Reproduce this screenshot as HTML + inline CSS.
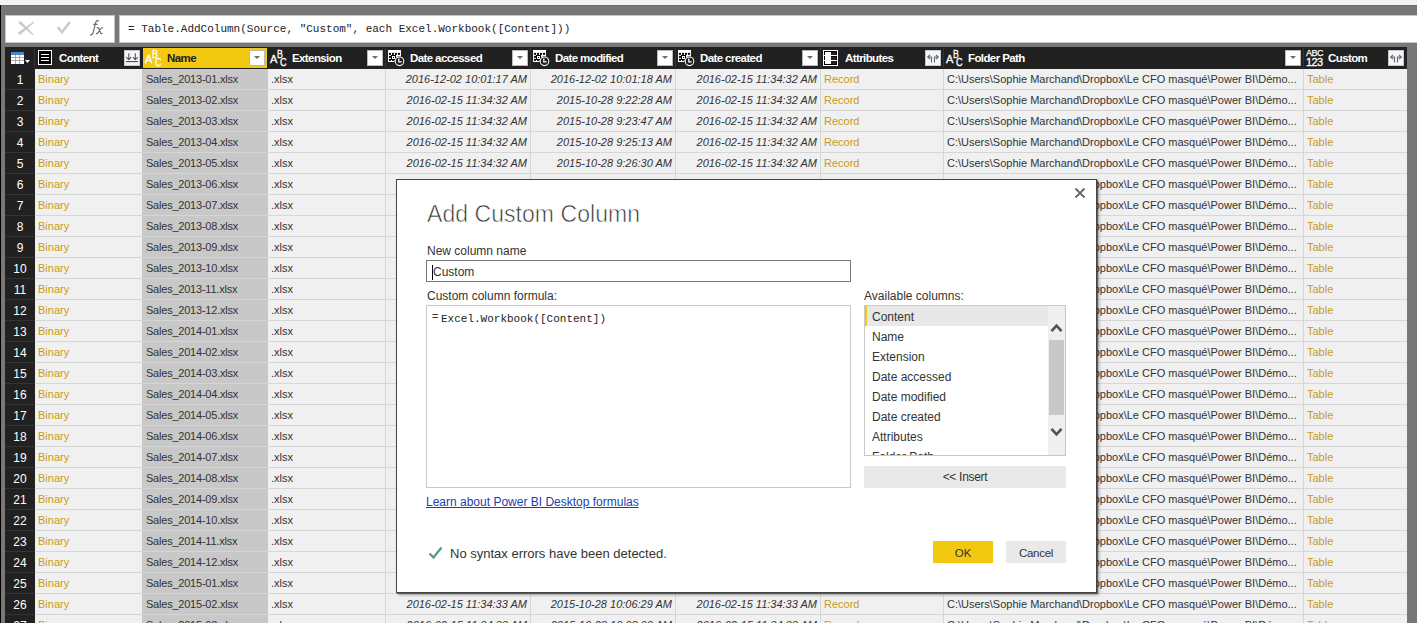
<!DOCTYPE html><html><head><meta charset="utf-8"><style>
*{margin:0;padding:0;box-sizing:border-box}
html,body{width:1417px;height:623px;overflow:hidden}
body{position:relative;background:#f3f3f3;font-family:"Liberation Sans",sans-serif;}
.a{position:absolute}
.t{position:absolute;white-space:nowrap;font-size:11px;line-height:13px}
.hd{position:absolute;white-space:nowrap;font-size:11.5px;line-height:13px;font-weight:bold;color:#fff;letter-spacing:-0.6px}
.dd{position:absolute;width:16px;height:16px;background:#fff;border:1px solid #b8b8b8}
.dd::after{content:"";position:absolute;left:4px;top:5px;border-left:3.5px solid transparent;border-right:3.5px solid transparent;border-top:3.5px solid #6a6a6a}
.rn{position:absolute;left:5px;width:30px;text-align:center;color:#fff;font-size:12px;line-height:13px}
.g{color:#c99a1a}
.d{color:#333}
.i{font-style:italic}
</style></head><body>

<div class="a" style="left:0;top:5px;width:1417px;height:618px;background:#777"></div>
<div class="a" style="left:0;top:5px;width:1417px;height:1px;background:#6e6e6e"></div>
<div class="a" style="left:0;top:5px;width:1px;height:618px;background:#000"></div>
<div class="a" style="left:5px;top:15px;width:110px;height:28px;background:#fff;border:1px solid #c6c6c6"></div>
<div class="a" style="left:119px;top:15px;width:1300px;height:28px;background:#fff;border:1px solid #c6c6c6"></div>
<div class="t" style="left:128px;top:23px;font-family:'Liberation Mono',monospace;font-size:11px;color:#222">= Table.AddColumn(Source, "Custom", each Excel.Workbook([Content]))</div>
<svg class="a" style="left:15px;top:18px" width="22" height="20" viewBox="15 18 22 20"><path d="M20.4 21.05 L33.27 34.41 L32.73 34.99 L18.6 22.95 Z" fill="#c9c9c9" stroke="#c9c9c9" stroke-width="0.6" stroke-linejoin="round"/><path d="M19.8 34.72 L33.85 22.51 L33.35 21.89 L18.2 32.68 Z" fill="#c9c9c9" stroke="#c9c9c9" stroke-width="0.6" stroke-linejoin="round"/></svg>
<svg class="a" style="left:53px;top:18px" width="22" height="20" viewBox="53 18 22 20"><path d="M57.8 27 L62 32.2 L69.8 22" stroke="#cbcbcb" stroke-width="2.6" fill="none"/></svg>
<svg class="a" style="left:85px;top:16px" width="22" height="24" viewBox="85 16 22 24"><path d="M98.8 21.3 C98.3 20.4 96.6 20.2 95.9 22 C95.2 23.8 94.2 29 93.3 32.2 C92.6 34.6 91.2 35.4 90.2 34.5" stroke="#666" stroke-width="1.15" fill="none"/><path d="M93 24.3 H97.8" stroke="#666" stroke-width="1.1"/><path d="M96.6 28 C97.8 27.3 98.6 27.6 99.2 29.4 L100.4 32.6 C100.9 33.9 101.8 34 102.6 33.2 M102.8 27.8 C102 27.5 101.3 28 100.5 29 L98 32.6 C97.4 33.5 96.6 33.8 96 33.5" stroke="#666" stroke-width="1.2" fill="none"/></svg>
<div class="a" style="left:5px;top:47px;width:1402px;height:22px;background:#212121"></div>
<div class="a" style="left:34px;top:48px;width:1px;height:20px;background:#333"></div>
<div class="a" style="left:385px;top:48px;width:1px;height:20px;background:#333"></div>
<div class="a" style="left:530px;top:48px;width:1px;height:20px;background:#333"></div>
<div class="a" style="left:675px;top:48px;width:1px;height:20px;background:#333"></div>
<div class="a" style="left:820px;top:48px;width:1px;height:20px;background:#333"></div>
<div class="a" style="left:943px;top:48px;width:1px;height:20px;background:#333"></div>
<div class="a" style="left:1303px;top:48px;width:1px;height:20px;background:#333"></div>
<div class="a" style="left:143px;top:48px;width:124px;height:20px;background:#f2c811"></div>
<div class="a" style="left:5px;top:69px;width:30px;height:554px;background:#212121"></div>
<div class="a" style="left:35px;top:69px;width:1372px;height:554px;background:#f0f0f0"></div>
<div class="a" style="left:142px;top:69px;width:126px;height:554px;background:#c8c8c8"></div>
<div class="a" style="left:35px;top:89px;width:1372px;height:1px;background:#d6d6d6"></div>
<div class="a" style="left:5px;top:89px;width:30px;height:1px;background:#333"></div>
<div class="a" style="left:35px;top:110px;width:1372px;height:1px;background:#d6d6d6"></div>
<div class="a" style="left:5px;top:110px;width:30px;height:1px;background:#333"></div>
<div class="a" style="left:35px;top:131px;width:1372px;height:1px;background:#d6d6d6"></div>
<div class="a" style="left:5px;top:131px;width:30px;height:1px;background:#333"></div>
<div class="a" style="left:35px;top:152px;width:1372px;height:1px;background:#d6d6d6"></div>
<div class="a" style="left:5px;top:152px;width:30px;height:1px;background:#333"></div>
<div class="a" style="left:35px;top:173px;width:1372px;height:1px;background:#d6d6d6"></div>
<div class="a" style="left:5px;top:173px;width:30px;height:1px;background:#333"></div>
<div class="a" style="left:35px;top:194px;width:1372px;height:1px;background:#d6d6d6"></div>
<div class="a" style="left:5px;top:194px;width:30px;height:1px;background:#333"></div>
<div class="a" style="left:35px;top:215px;width:1372px;height:1px;background:#d6d6d6"></div>
<div class="a" style="left:5px;top:215px;width:30px;height:1px;background:#333"></div>
<div class="a" style="left:35px;top:236px;width:1372px;height:1px;background:#d6d6d6"></div>
<div class="a" style="left:5px;top:236px;width:30px;height:1px;background:#333"></div>
<div class="a" style="left:35px;top:257px;width:1372px;height:1px;background:#d6d6d6"></div>
<div class="a" style="left:5px;top:257px;width:30px;height:1px;background:#333"></div>
<div class="a" style="left:35px;top:278px;width:1372px;height:1px;background:#d6d6d6"></div>
<div class="a" style="left:5px;top:278px;width:30px;height:1px;background:#333"></div>
<div class="a" style="left:35px;top:299px;width:1372px;height:1px;background:#d6d6d6"></div>
<div class="a" style="left:5px;top:299px;width:30px;height:1px;background:#333"></div>
<div class="a" style="left:35px;top:320px;width:1372px;height:1px;background:#d6d6d6"></div>
<div class="a" style="left:5px;top:320px;width:30px;height:1px;background:#333"></div>
<div class="a" style="left:35px;top:341px;width:1372px;height:1px;background:#d6d6d6"></div>
<div class="a" style="left:5px;top:341px;width:30px;height:1px;background:#333"></div>
<div class="a" style="left:35px;top:362px;width:1372px;height:1px;background:#d6d6d6"></div>
<div class="a" style="left:5px;top:362px;width:30px;height:1px;background:#333"></div>
<div class="a" style="left:35px;top:383px;width:1372px;height:1px;background:#d6d6d6"></div>
<div class="a" style="left:5px;top:383px;width:30px;height:1px;background:#333"></div>
<div class="a" style="left:35px;top:404px;width:1372px;height:1px;background:#d6d6d6"></div>
<div class="a" style="left:5px;top:404px;width:30px;height:1px;background:#333"></div>
<div class="a" style="left:35px;top:425px;width:1372px;height:1px;background:#d6d6d6"></div>
<div class="a" style="left:5px;top:425px;width:30px;height:1px;background:#333"></div>
<div class="a" style="left:35px;top:446px;width:1372px;height:1px;background:#d6d6d6"></div>
<div class="a" style="left:5px;top:446px;width:30px;height:1px;background:#333"></div>
<div class="a" style="left:35px;top:467px;width:1372px;height:1px;background:#d6d6d6"></div>
<div class="a" style="left:5px;top:467px;width:30px;height:1px;background:#333"></div>
<div class="a" style="left:35px;top:488px;width:1372px;height:1px;background:#d6d6d6"></div>
<div class="a" style="left:5px;top:488px;width:30px;height:1px;background:#333"></div>
<div class="a" style="left:35px;top:509px;width:1372px;height:1px;background:#d6d6d6"></div>
<div class="a" style="left:5px;top:509px;width:30px;height:1px;background:#333"></div>
<div class="a" style="left:35px;top:530px;width:1372px;height:1px;background:#d6d6d6"></div>
<div class="a" style="left:5px;top:530px;width:30px;height:1px;background:#333"></div>
<div class="a" style="left:35px;top:551px;width:1372px;height:1px;background:#d6d6d6"></div>
<div class="a" style="left:5px;top:551px;width:30px;height:1px;background:#333"></div>
<div class="a" style="left:35px;top:572px;width:1372px;height:1px;background:#d6d6d6"></div>
<div class="a" style="left:5px;top:572px;width:30px;height:1px;background:#333"></div>
<div class="a" style="left:35px;top:593px;width:1372px;height:1px;background:#d6d6d6"></div>
<div class="a" style="left:5px;top:593px;width:30px;height:1px;background:#333"></div>
<div class="a" style="left:35px;top:614px;width:1372px;height:1px;background:#d6d6d6"></div>
<div class="a" style="left:5px;top:614px;width:30px;height:1px;background:#333"></div>
<div class="a" style="left:35px;top:635px;width:1372px;height:1px;background:#d6d6d6"></div>
<div class="a" style="left:5px;top:635px;width:30px;height:1px;background:#333"></div>
<div class="a" style="left:385px;top:69px;width:1px;height:554px;background:#d6d6d6"></div>
<div class="a" style="left:530px;top:69px;width:1px;height:554px;background:#d6d6d6"></div>
<div class="a" style="left:675px;top:69px;width:1px;height:554px;background:#d6d6d6"></div>
<div class="a" style="left:820px;top:69px;width:1px;height:554px;background:#d6d6d6"></div>
<div class="a" style="left:943px;top:69px;width:1px;height:554px;background:#d6d6d6"></div>
<div class="a" style="left:1303px;top:69px;width:1px;height:554px;background:#d6d6d6"></div>
<div class="rn" style="top:74px">1</div>
<div class="t g" style="left:38px;top:73px">Binary</div>
<div class="t d" style="left:146px;top:73px;letter-spacing:-0.22px">Sales_2013-01.xlsx</div>
<div class="t d" style="left:271px;top:73px">.xlsx</div>
<div class="t d i" style="right:890px;top:73px">2016-12-02 10:01:17 AM</div>
<div class="t d i" style="right:745px;top:73px">2016-12-02 10:01:18 AM</div>
<div class="t d i" style="right:600px;top:73px">2016-02-15 11:34:32 AM</div>
<div class="t g" style="left:824px;top:73px">Record</div>
<div class="t d" style="left:947px;top:73px">C:\Users\Sophie Marchand\Dropbox\Le CFO masqué\Power BI\Démo...</div>
<div class="t g" style="left:1307px;top:73px">Table</div>
<div class="rn" style="top:95px">2</div>
<div class="t g" style="left:38px;top:94px">Binary</div>
<div class="t d" style="left:146px;top:94px;letter-spacing:-0.22px">Sales_2013-02.xlsx</div>
<div class="t d" style="left:271px;top:94px">.xlsx</div>
<div class="t d i" style="right:890px;top:94px">2016-02-15 11:34:32 AM</div>
<div class="t d i" style="right:745px;top:94px">2015-10-28 9:22:28 AM</div>
<div class="t d i" style="right:600px;top:94px">2016-02-15 11:34:32 AM</div>
<div class="t g" style="left:824px;top:94px">Record</div>
<div class="t d" style="left:947px;top:94px">C:\Users\Sophie Marchand\Dropbox\Le CFO masqué\Power BI\Démo...</div>
<div class="t g" style="left:1307px;top:94px">Table</div>
<div class="rn" style="top:116px">3</div>
<div class="t g" style="left:38px;top:115px">Binary</div>
<div class="t d" style="left:146px;top:115px;letter-spacing:-0.22px">Sales_2013-03.xlsx</div>
<div class="t d" style="left:271px;top:115px">.xlsx</div>
<div class="t d i" style="right:890px;top:115px">2016-02-15 11:34:32 AM</div>
<div class="t d i" style="right:745px;top:115px">2015-10-28 9:23:47 AM</div>
<div class="t d i" style="right:600px;top:115px">2016-02-15 11:34:32 AM</div>
<div class="t g" style="left:824px;top:115px">Record</div>
<div class="t d" style="left:947px;top:115px">C:\Users\Sophie Marchand\Dropbox\Le CFO masqué\Power BI\Démo...</div>
<div class="t g" style="left:1307px;top:115px">Table</div>
<div class="rn" style="top:137px">4</div>
<div class="t g" style="left:38px;top:136px">Binary</div>
<div class="t d" style="left:146px;top:136px;letter-spacing:-0.22px">Sales_2013-04.xlsx</div>
<div class="t d" style="left:271px;top:136px">.xlsx</div>
<div class="t d i" style="right:890px;top:136px">2016-02-15 11:34:32 AM</div>
<div class="t d i" style="right:745px;top:136px">2015-10-28 9:25:13 AM</div>
<div class="t d i" style="right:600px;top:136px">2016-02-15 11:34:32 AM</div>
<div class="t g" style="left:824px;top:136px">Record</div>
<div class="t d" style="left:947px;top:136px">C:\Users\Sophie Marchand\Dropbox\Le CFO masqué\Power BI\Démo...</div>
<div class="t g" style="left:1307px;top:136px">Table</div>
<div class="rn" style="top:158px">5</div>
<div class="t g" style="left:38px;top:157px">Binary</div>
<div class="t d" style="left:146px;top:157px;letter-spacing:-0.22px">Sales_2013-05.xlsx</div>
<div class="t d" style="left:271px;top:157px">.xlsx</div>
<div class="t d i" style="right:890px;top:157px">2016-02-15 11:34:32 AM</div>
<div class="t d i" style="right:745px;top:157px">2015-10-28 9:26:30 AM</div>
<div class="t d i" style="right:600px;top:157px">2016-02-15 11:34:32 AM</div>
<div class="t g" style="left:824px;top:157px">Record</div>
<div class="t d" style="left:947px;top:157px">C:\Users\Sophie Marchand\Dropbox\Le CFO masqué\Power BI\Démo...</div>
<div class="t g" style="left:1307px;top:157px">Table</div>
<div class="rn" style="top:179px">6</div>
<div class="t g" style="left:38px;top:178px">Binary</div>
<div class="t d" style="left:146px;top:178px;letter-spacing:-0.22px">Sales_2013-06.xlsx</div>
<div class="t d" style="left:271px;top:178px">.xlsx</div>
<div class="t d i" style="right:890px;top:178px">2016-02-15 11:34:32 AM</div>
<div class="t d i" style="right:745px;top:178px">2015-10-28 9:32:42 AM</div>
<div class="t d i" style="right:600px;top:178px">2016-02-15 11:34:32 AM</div>
<div class="t g" style="left:824px;top:178px">Record</div>
<div class="t d" style="left:947px;top:178px">C:\Users\Sophie Marchand\Dropbox\Le CFO masqué\Power BI\Démo...</div>
<div class="t g" style="left:1307px;top:178px">Table</div>
<div class="rn" style="top:200px">7</div>
<div class="t g" style="left:38px;top:199px">Binary</div>
<div class="t d" style="left:146px;top:199px;letter-spacing:-0.22px">Sales_2013-07.xlsx</div>
<div class="t d" style="left:271px;top:199px">.xlsx</div>
<div class="t d i" style="right:890px;top:199px">2016-02-15 11:34:32 AM</div>
<div class="t d i" style="right:745px;top:199px">2015-10-28 9:33:49 AM</div>
<div class="t d i" style="right:600px;top:199px">2016-02-15 11:34:32 AM</div>
<div class="t g" style="left:824px;top:199px">Record</div>
<div class="t d" style="left:947px;top:199px">C:\Users\Sophie Marchand\Dropbox\Le CFO masqué\Power BI\Démo...</div>
<div class="t g" style="left:1307px;top:199px">Table</div>
<div class="rn" style="top:221px">8</div>
<div class="t g" style="left:38px;top:220px">Binary</div>
<div class="t d" style="left:146px;top:220px;letter-spacing:-0.22px">Sales_2013-08.xlsx</div>
<div class="t d" style="left:271px;top:220px">.xlsx</div>
<div class="t d i" style="right:890px;top:220px">2016-02-15 11:34:32 AM</div>
<div class="t d i" style="right:745px;top:220px">2015-10-28 9:34:56 AM</div>
<div class="t d i" style="right:600px;top:220px">2016-02-15 11:34:32 AM</div>
<div class="t g" style="left:824px;top:220px">Record</div>
<div class="t d" style="left:947px;top:220px">C:\Users\Sophie Marchand\Dropbox\Le CFO masqué\Power BI\Démo...</div>
<div class="t g" style="left:1307px;top:220px">Table</div>
<div class="rn" style="top:242px">9</div>
<div class="t g" style="left:38px;top:241px">Binary</div>
<div class="t d" style="left:146px;top:241px;letter-spacing:-0.22px">Sales_2013-09.xlsx</div>
<div class="t d" style="left:271px;top:241px">.xlsx</div>
<div class="t d i" style="right:890px;top:241px">2016-02-15 11:34:32 AM</div>
<div class="t d i" style="right:745px;top:241px">2015-10-28 9:35:03 AM</div>
<div class="t d i" style="right:600px;top:241px">2016-02-15 11:34:32 AM</div>
<div class="t g" style="left:824px;top:241px">Record</div>
<div class="t d" style="left:947px;top:241px">C:\Users\Sophie Marchand\Dropbox\Le CFO masqué\Power BI\Démo...</div>
<div class="t g" style="left:1307px;top:241px">Table</div>
<div class="rn" style="top:263px">10</div>
<div class="t g" style="left:38px;top:262px">Binary</div>
<div class="t d" style="left:146px;top:262px;letter-spacing:-0.22px">Sales_2013-10.xlsx</div>
<div class="t d" style="left:271px;top:262px">.xlsx</div>
<div class="t d i" style="right:890px;top:262px">2016-02-15 11:34:32 AM</div>
<div class="t d i" style="right:745px;top:262px">2015-10-28 9:36:10 AM</div>
<div class="t d i" style="right:600px;top:262px">2016-02-15 11:34:32 AM</div>
<div class="t g" style="left:824px;top:262px">Record</div>
<div class="t d" style="left:947px;top:262px">C:\Users\Sophie Marchand\Dropbox\Le CFO masqué\Power BI\Démo...</div>
<div class="t g" style="left:1307px;top:262px">Table</div>
<div class="rn" style="top:284px">11</div>
<div class="t g" style="left:38px;top:283px">Binary</div>
<div class="t d" style="left:146px;top:283px;letter-spacing:-0.22px">Sales_2013-11.xlsx</div>
<div class="t d" style="left:271px;top:283px">.xlsx</div>
<div class="t d i" style="right:890px;top:283px">2016-02-15 11:34:32 AM</div>
<div class="t d i" style="right:745px;top:283px">2015-10-28 9:37:17 AM</div>
<div class="t d i" style="right:600px;top:283px">2016-02-15 11:34:32 AM</div>
<div class="t g" style="left:824px;top:283px">Record</div>
<div class="t d" style="left:947px;top:283px">C:\Users\Sophie Marchand\Dropbox\Le CFO masqué\Power BI\Démo...</div>
<div class="t g" style="left:1307px;top:283px">Table</div>
<div class="rn" style="top:305px">12</div>
<div class="t g" style="left:38px;top:304px">Binary</div>
<div class="t d" style="left:146px;top:304px;letter-spacing:-0.22px">Sales_2013-12.xlsx</div>
<div class="t d" style="left:271px;top:304px">.xlsx</div>
<div class="t d i" style="right:890px;top:304px">2016-02-15 11:34:32 AM</div>
<div class="t d i" style="right:745px;top:304px">2015-10-28 9:38:24 AM</div>
<div class="t d i" style="right:600px;top:304px">2016-02-15 11:34:32 AM</div>
<div class="t g" style="left:824px;top:304px">Record</div>
<div class="t d" style="left:947px;top:304px">C:\Users\Sophie Marchand\Dropbox\Le CFO masqué\Power BI\Démo...</div>
<div class="t g" style="left:1307px;top:304px">Table</div>
<div class="rn" style="top:326px">13</div>
<div class="t g" style="left:38px;top:325px">Binary</div>
<div class="t d" style="left:146px;top:325px;letter-spacing:-0.22px">Sales_2014-01.xlsx</div>
<div class="t d" style="left:271px;top:325px">.xlsx</div>
<div class="t d i" style="right:890px;top:325px">2016-02-15 11:34:32 AM</div>
<div class="t d i" style="right:745px;top:325px">2015-10-28 9:39:31 AM</div>
<div class="t d i" style="right:600px;top:325px">2016-02-15 11:34:32 AM</div>
<div class="t g" style="left:824px;top:325px">Record</div>
<div class="t d" style="left:947px;top:325px">C:\Users\Sophie Marchand\Dropbox\Le CFO masqué\Power BI\Démo...</div>
<div class="t g" style="left:1307px;top:325px">Table</div>
<div class="rn" style="top:347px">14</div>
<div class="t g" style="left:38px;top:346px">Binary</div>
<div class="t d" style="left:146px;top:346px;letter-spacing:-0.22px">Sales_2014-02.xlsx</div>
<div class="t d" style="left:271px;top:346px">.xlsx</div>
<div class="t d i" style="right:890px;top:346px">2016-02-15 11:34:32 AM</div>
<div class="t d i" style="right:745px;top:346px">2015-10-28 9:40:38 AM</div>
<div class="t d i" style="right:600px;top:346px">2016-02-15 11:34:32 AM</div>
<div class="t g" style="left:824px;top:346px">Record</div>
<div class="t d" style="left:947px;top:346px">C:\Users\Sophie Marchand\Dropbox\Le CFO masqué\Power BI\Démo...</div>
<div class="t g" style="left:1307px;top:346px">Table</div>
<div class="rn" style="top:368px">15</div>
<div class="t g" style="left:38px;top:367px">Binary</div>
<div class="t d" style="left:146px;top:367px;letter-spacing:-0.22px">Sales_2014-03.xlsx</div>
<div class="t d" style="left:271px;top:367px">.xlsx</div>
<div class="t d i" style="right:890px;top:367px">2016-02-15 11:34:32 AM</div>
<div class="t d i" style="right:745px;top:367px">2015-10-28 9:41:45 AM</div>
<div class="t d i" style="right:600px;top:367px">2016-02-15 11:34:32 AM</div>
<div class="t g" style="left:824px;top:367px">Record</div>
<div class="t d" style="left:947px;top:367px">C:\Users\Sophie Marchand\Dropbox\Le CFO masqué\Power BI\Démo...</div>
<div class="t g" style="left:1307px;top:367px">Table</div>
<div class="rn" style="top:389px">16</div>
<div class="t g" style="left:38px;top:388px">Binary</div>
<div class="t d" style="left:146px;top:388px;letter-spacing:-0.22px">Sales_2014-04.xlsx</div>
<div class="t d" style="left:271px;top:388px">.xlsx</div>
<div class="t d i" style="right:890px;top:388px">2016-02-15 11:34:32 AM</div>
<div class="t d i" style="right:745px;top:388px">2015-10-28 9:42:52 AM</div>
<div class="t d i" style="right:600px;top:388px">2016-02-15 11:34:32 AM</div>
<div class="t g" style="left:824px;top:388px">Record</div>
<div class="t d" style="left:947px;top:388px">C:\Users\Sophie Marchand\Dropbox\Le CFO masqué\Power BI\Démo...</div>
<div class="t g" style="left:1307px;top:388px">Table</div>
<div class="rn" style="top:410px">17</div>
<div class="t g" style="left:38px;top:409px">Binary</div>
<div class="t d" style="left:146px;top:409px;letter-spacing:-0.22px">Sales_2014-05.xlsx</div>
<div class="t d" style="left:271px;top:409px">.xlsx</div>
<div class="t d i" style="right:890px;top:409px">2016-02-15 11:34:32 AM</div>
<div class="t d i" style="right:745px;top:409px">2015-10-28 9:43:59 AM</div>
<div class="t d i" style="right:600px;top:409px">2016-02-15 11:34:32 AM</div>
<div class="t g" style="left:824px;top:409px">Record</div>
<div class="t d" style="left:947px;top:409px">C:\Users\Sophie Marchand\Dropbox\Le CFO masqué\Power BI\Démo...</div>
<div class="t g" style="left:1307px;top:409px">Table</div>
<div class="rn" style="top:431px">18</div>
<div class="t g" style="left:38px;top:430px">Binary</div>
<div class="t d" style="left:146px;top:430px;letter-spacing:-0.22px">Sales_2014-06.xlsx</div>
<div class="t d" style="left:271px;top:430px">.xlsx</div>
<div class="t d i" style="right:890px;top:430px">2016-02-15 11:34:32 AM</div>
<div class="t d i" style="right:745px;top:430px">2015-10-28 9:44:06 AM</div>
<div class="t d i" style="right:600px;top:430px">2016-02-15 11:34:32 AM</div>
<div class="t g" style="left:824px;top:430px">Record</div>
<div class="t d" style="left:947px;top:430px">C:\Users\Sophie Marchand\Dropbox\Le CFO masqué\Power BI\Démo...</div>
<div class="t g" style="left:1307px;top:430px">Table</div>
<div class="rn" style="top:452px">19</div>
<div class="t g" style="left:38px;top:451px">Binary</div>
<div class="t d" style="left:146px;top:451px;letter-spacing:-0.22px">Sales_2014-07.xlsx</div>
<div class="t d" style="left:271px;top:451px">.xlsx</div>
<div class="t d i" style="right:890px;top:451px">2016-02-15 11:34:32 AM</div>
<div class="t d i" style="right:745px;top:451px">2015-10-28 9:45:13 AM</div>
<div class="t d i" style="right:600px;top:451px">2016-02-15 11:34:32 AM</div>
<div class="t g" style="left:824px;top:451px">Record</div>
<div class="t d" style="left:947px;top:451px">C:\Users\Sophie Marchand\Dropbox\Le CFO masqué\Power BI\Démo...</div>
<div class="t g" style="left:1307px;top:451px">Table</div>
<div class="rn" style="top:473px">20</div>
<div class="t g" style="left:38px;top:472px">Binary</div>
<div class="t d" style="left:146px;top:472px;letter-spacing:-0.22px">Sales_2014-08.xlsx</div>
<div class="t d" style="left:271px;top:472px">.xlsx</div>
<div class="t d i" style="right:890px;top:472px">2016-02-15 11:34:32 AM</div>
<div class="t d i" style="right:745px;top:472px">2015-10-28 9:46:20 AM</div>
<div class="t d i" style="right:600px;top:472px">2016-02-15 11:34:32 AM</div>
<div class="t g" style="left:824px;top:472px">Record</div>
<div class="t d" style="left:947px;top:472px">C:\Users\Sophie Marchand\Dropbox\Le CFO masqué\Power BI\Démo...</div>
<div class="t g" style="left:1307px;top:472px">Table</div>
<div class="rn" style="top:494px">21</div>
<div class="t g" style="left:38px;top:493px">Binary</div>
<div class="t d" style="left:146px;top:493px;letter-spacing:-0.22px">Sales_2014-09.xlsx</div>
<div class="t d" style="left:271px;top:493px">.xlsx</div>
<div class="t d i" style="right:890px;top:493px">2016-02-15 11:34:32 AM</div>
<div class="t d i" style="right:745px;top:493px">2015-10-28 9:47:27 AM</div>
<div class="t d i" style="right:600px;top:493px">2016-02-15 11:34:32 AM</div>
<div class="t g" style="left:824px;top:493px">Record</div>
<div class="t d" style="left:947px;top:493px">C:\Users\Sophie Marchand\Dropbox\Le CFO masqué\Power BI\Démo...</div>
<div class="t g" style="left:1307px;top:493px">Table</div>
<div class="rn" style="top:515px">22</div>
<div class="t g" style="left:38px;top:514px">Binary</div>
<div class="t d" style="left:146px;top:514px;letter-spacing:-0.22px">Sales_2014-10.xlsx</div>
<div class="t d" style="left:271px;top:514px">.xlsx</div>
<div class="t d i" style="right:890px;top:514px">2016-02-15 11:34:32 AM</div>
<div class="t d i" style="right:745px;top:514px">2015-10-28 9:48:34 AM</div>
<div class="t d i" style="right:600px;top:514px">2016-02-15 11:34:32 AM</div>
<div class="t g" style="left:824px;top:514px">Record</div>
<div class="t d" style="left:947px;top:514px">C:\Users\Sophie Marchand\Dropbox\Le CFO masqué\Power BI\Démo...</div>
<div class="t g" style="left:1307px;top:514px">Table</div>
<div class="rn" style="top:536px">23</div>
<div class="t g" style="left:38px;top:535px">Binary</div>
<div class="t d" style="left:146px;top:535px;letter-spacing:-0.22px">Sales_2014-11.xlsx</div>
<div class="t d" style="left:271px;top:535px">.xlsx</div>
<div class="t d i" style="right:890px;top:535px">2016-02-15 11:34:32 AM</div>
<div class="t d i" style="right:745px;top:535px">2015-10-28 9:49:41 AM</div>
<div class="t d i" style="right:600px;top:535px">2016-02-15 11:34:32 AM</div>
<div class="t g" style="left:824px;top:535px">Record</div>
<div class="t d" style="left:947px;top:535px">C:\Users\Sophie Marchand\Dropbox\Le CFO masqué\Power BI\Démo...</div>
<div class="t g" style="left:1307px;top:535px">Table</div>
<div class="rn" style="top:557px">24</div>
<div class="t g" style="left:38px;top:556px">Binary</div>
<div class="t d" style="left:146px;top:556px;letter-spacing:-0.22px">Sales_2014-12.xlsx</div>
<div class="t d" style="left:271px;top:556px">.xlsx</div>
<div class="t d i" style="right:890px;top:556px">2016-02-15 11:34:32 AM</div>
<div class="t d i" style="right:745px;top:556px">2015-10-28 9:50:48 AM</div>
<div class="t d i" style="right:600px;top:556px">2016-02-15 11:34:32 AM</div>
<div class="t g" style="left:824px;top:556px">Record</div>
<div class="t d" style="left:947px;top:556px">C:\Users\Sophie Marchand\Dropbox\Le CFO masqué\Power BI\Démo...</div>
<div class="t g" style="left:1307px;top:556px">Table</div>
<div class="rn" style="top:578px">25</div>
<div class="t g" style="left:38px;top:577px">Binary</div>
<div class="t d" style="left:146px;top:577px;letter-spacing:-0.22px">Sales_2015-01.xlsx</div>
<div class="t d" style="left:271px;top:577px">.xlsx</div>
<div class="t d i" style="right:890px;top:577px">2016-02-15 11:34:32 AM</div>
<div class="t d i" style="right:745px;top:577px">2015-10-28 9:51:55 AM</div>
<div class="t d i" style="right:600px;top:577px">2016-02-15 11:34:32 AM</div>
<div class="t g" style="left:824px;top:577px">Record</div>
<div class="t d" style="left:947px;top:577px">C:\Users\Sophie Marchand\Dropbox\Le CFO masqué\Power BI\Démo...</div>
<div class="t g" style="left:1307px;top:577px">Table</div>
<div class="rn" style="top:599px">26</div>
<div class="t g" style="left:38px;top:598px">Binary</div>
<div class="t d" style="left:146px;top:598px;letter-spacing:-0.22px">Sales_2015-02.xlsx</div>
<div class="t d" style="left:271px;top:598px">.xlsx</div>
<div class="t d i" style="right:890px;top:598px">2016-02-15 11:34:33 AM</div>
<div class="t d i" style="right:745px;top:598px">2015-10-28 10:06:29 AM</div>
<div class="t d i" style="right:600px;top:598px">2016-02-15 11:34:33 AM</div>
<div class="t g" style="left:824px;top:598px">Record</div>
<div class="t d" style="left:947px;top:598px">C:\Users\Sophie Marchand\Dropbox\Le CFO masqué\Power BI\Démo...</div>
<div class="t g" style="left:1307px;top:598px">Table</div>
<div class="rn" style="top:620px">27</div>
<div class="t g" style="left:38px;top:619px">Binary</div>
<div class="t d" style="left:146px;top:619px;letter-spacing:-0.22px">Sales_2015-03.xlsx</div>
<div class="t d" style="left:271px;top:619px">.xlsx</div>
<div class="t d i" style="right:890px;top:619px">2016-02-15 11:34:33 AM</div>
<div class="t d i" style="right:745px;top:619px">2015-10-28 10:08:00 AM</div>
<div class="t d i" style="right:600px;top:619px">2016-02-15 11:34:33 AM</div>
<div class="t g" style="left:824px;top:619px">Record</div>
<div class="t d" style="left:947px;top:619px">C:\Users\Sophie Marchand\Dropbox\Le CFO masqué\Power BI\Démo...</div>
<div class="t g" style="left:1307px;top:619px">Table</div>
<div class="hd" style="left:59px;top:52px">Content</div>
<div class="hd" style="left:167px;top:52px;color:#222">Name</div>
<div class="hd" style="left:292px;top:52px">Extension</div>
<div class="hd" style="left:410px;top:52px">Date accessed</div>
<div class="hd" style="left:555px;top:52px">Date modified</div>
<div class="hd" style="left:700px;top:52px">Date created</div>
<div class="hd" style="left:845px;top:52px">Attributes</div>
<div class="hd" style="left:968px;top:52px">Folder Path</div>
<div class="hd" style="left:1328px;top:52px">Custom</div>
<div class="dd" style="left:249px;top:50px"></div>
<div class="dd" style="left:367px;top:50px"></div>
<div class="dd" style="left:512px;top:50px"></div>
<div class="dd" style="left:657px;top:50px"></div>
<div class="dd" style="left:802px;top:50px"></div>
<div class="dd" style="left:1285px;top:50px"></div>
<div class="a" style="left:124px;top:50px;width:16px;height:16px;background:#f4f6f9;border:1px solid #c4c9d0"></div>
<div class="a" style="left:925px;top:50px;width:16px;height:16px;background:#f4f6f9;border:1px solid #c4c9d0"></div>
<div class="a" style="left:1388px;top:50px;width:16px;height:16px;background:#f4f6f9;border:1px solid #c4c9d0"></div>
<svg class="a" style="left:11px;top:52px" width="20" height="12" shape-rendering="crispEdges"><rect x="0" y="0" width="13" height="3" fill="#4a87c6"/><rect x="0" y="3" width="13" height="9" fill="#fff"/><rect x="4" y="3" width="1" height="9" fill="#aaa"/><rect x="8" y="3" width="1" height="9" fill="#aaa"/><rect x="0" y="5" width="13" height="1" fill="#aaa"/><rect x="0" y="8" width="13" height="1" fill="#aaa"/><path d="M14 8 L19 8 L16.5 11 Z" fill="#fff" shape-rendering="auto"/></svg>
<svg class="a" style="left:38px;top:50px" width="14" height="15" shape-rendering="crispEdges"><rect x="0.5" y="0.5" width="13" height="14" fill="#000" stroke="#fff" stroke-width="1.4"/><rect x="3" y="4" width="8" height="1" fill="#fff"/><rect x="3" y="7" width="8" height="1" fill="#fff"/><rect x="3" y="10" width="8" height="1" fill="#fff"/></svg>
<div class="a" style="left:145px;top:54px;font-size:11px;line-height:11px;color:#fff;-webkit-text-stroke:0.35px #fff">A</div>
<div class="a" style="left:152px;top:49px;font-size:11px;line-height:11px;color:#fff;-webkit-text-stroke:0.35px #fff;transform:scaleX(.8);transform-origin:0 0">B</div>
<div class="a" style="left:155px;top:57px;font-size:11px;line-height:11px;color:#fff;-webkit-text-stroke:0.35px #fff;transform:scaleX(.82);transform-origin:0 0">C</div>
<div class="a" style="left:270px;top:54px;font-size:11px;line-height:11px;color:#fff;-webkit-text-stroke:0.35px #fff">A</div>
<div class="a" style="left:277px;top:49px;font-size:11px;line-height:11px;color:#fff;-webkit-text-stroke:0.35px #fff;transform:scaleX(.8);transform-origin:0 0">B</div>
<div class="a" style="left:280px;top:57px;font-size:11px;line-height:11px;color:#fff;-webkit-text-stroke:0.35px #fff;transform:scaleX(.82);transform-origin:0 0">C</div>
<div class="a" style="left:946px;top:54px;font-size:11px;line-height:11px;color:#fff;-webkit-text-stroke:0.35px #fff">A</div>
<div class="a" style="left:953px;top:49px;font-size:11px;line-height:11px;color:#fff;-webkit-text-stroke:0.35px #fff;transform:scaleX(.8);transform-origin:0 0">B</div>
<div class="a" style="left:956px;top:57px;font-size:11px;line-height:11px;color:#fff;-webkit-text-stroke:0.35px #fff;transform:scaleX(.82);transform-origin:0 0">C</div>
<svg class="a" style="left:388px;top:50px" width="18" height="17"><rect x="0" y="0" width="13" height="12" fill="#fff" shape-rendering="crispEdges"/><circle cx="2" cy="3.9" r="1.15" fill="#000"/><circle cx="5" cy="3.9" r="1.15" fill="#000"/><circle cx="8" cy="3.9" r="1.15" fill="#000"/><circle cx="11" cy="3.9" r="1.15" fill="#000"/><circle cx="2" cy="6.9" r="1.15" fill="#000"/><circle cx="2" cy="9.9" r="1.15" fill="#000"/><circle cx="5" cy="9.9" r="1.15" fill="#000"/><rect x="3" y="5" width="5" height="5" fill="#000" shape-rendering="crispEdges"/><rect x="4" y="6" width="3" height="3" fill="#fff" shape-rendering="crispEdges"/><rect x="5" y="7" width="1" height="1" fill="#000" shape-rendering="crispEdges"/><circle cx="11.5" cy="11.3" r="5" fill="#000"/><circle cx="11.5" cy="11.3" r="4.3" fill="#212121" stroke="#fff" stroke-width="1.1"/><path d="M10.8 8.5 V11.8 H13.6" stroke="#fff" stroke-width="1.3" fill="none"/></svg>
<svg class="a" style="left:533px;top:50px" width="18" height="17"><rect x="0" y="0" width="13" height="12" fill="#fff" shape-rendering="crispEdges"/><circle cx="2" cy="3.9" r="1.15" fill="#000"/><circle cx="5" cy="3.9" r="1.15" fill="#000"/><circle cx="8" cy="3.9" r="1.15" fill="#000"/><circle cx="11" cy="3.9" r="1.15" fill="#000"/><circle cx="2" cy="6.9" r="1.15" fill="#000"/><circle cx="2" cy="9.9" r="1.15" fill="#000"/><circle cx="5" cy="9.9" r="1.15" fill="#000"/><rect x="3" y="5" width="5" height="5" fill="#000" shape-rendering="crispEdges"/><rect x="4" y="6" width="3" height="3" fill="#fff" shape-rendering="crispEdges"/><rect x="5" y="7" width="1" height="1" fill="#000" shape-rendering="crispEdges"/><circle cx="11.5" cy="11.3" r="5" fill="#000"/><circle cx="11.5" cy="11.3" r="4.3" fill="#212121" stroke="#fff" stroke-width="1.1"/><path d="M10.8 8.5 V11.8 H13.6" stroke="#fff" stroke-width="1.3" fill="none"/></svg>
<svg class="a" style="left:678px;top:50px" width="18" height="17"><rect x="0" y="0" width="13" height="12" fill="#fff" shape-rendering="crispEdges"/><circle cx="2" cy="3.9" r="1.15" fill="#000"/><circle cx="5" cy="3.9" r="1.15" fill="#000"/><circle cx="8" cy="3.9" r="1.15" fill="#000"/><circle cx="11" cy="3.9" r="1.15" fill="#000"/><circle cx="2" cy="6.9" r="1.15" fill="#000"/><circle cx="2" cy="9.9" r="1.15" fill="#000"/><circle cx="5" cy="9.9" r="1.15" fill="#000"/><rect x="3" y="5" width="5" height="5" fill="#000" shape-rendering="crispEdges"/><rect x="4" y="6" width="3" height="3" fill="#fff" shape-rendering="crispEdges"/><rect x="5" y="7" width="1" height="1" fill="#000" shape-rendering="crispEdges"/><circle cx="11.5" cy="11.3" r="5" fill="#000"/><circle cx="11.5" cy="11.3" r="4.3" fill="#212121" stroke="#fff" stroke-width="1.1"/><path d="M10.8 8.5 V11.8 H13.6" stroke="#fff" stroke-width="1.3" fill="none"/></svg>
<svg class="a" style="left:823px;top:50px" width="15" height="16" shape-rendering="crispEdges"><rect x="0" y="0" width="15" height="16" fill="#fff"/><rect x="1" y="1" width="13" height="14" fill="#000"/><rect x="2" y="2" width="6" height="3" fill="#fff"/><rect x="2" y="6" width="6" height="4" fill="#fff"/><rect x="2" y="11" width="6" height="3" fill="#fff"/><rect x="8" y="2" width="5" height="3" fill="#222"/><rect x="8" y="7" width="5" height="3" fill="#222"/><rect x="8" y="11" width="5" height="3" fill="#222"/><rect x="1" y="5" width="13" height="1" fill="#fff"/><rect x="1" y="10" width="13" height="1" fill="#fff"/></svg>
<div class="a" style="left:1306px;top:49px;font-size:9px;line-height:9px;color:#fff;letter-spacing:-0.5px;-webkit-text-stroke:0.25px #fff">ABC</div>
<div class="a" style="left:1306px;top:57px;font-size:11px;line-height:11px;color:#fff;letter-spacing:-0.6px;-webkit-text-stroke:0.3px #fff">123</div>
<svg class="a" style="left:124px;top:50px" width="16" height="16"><path d="M4.8 3.3 V9.5 M2.4 7.2 L4.8 9.8 L7.2 7.2 M11.3 3.3 V9.5 M8.9 7.2 L11.3 9.8 L13.7 7.2" stroke="#555" stroke-width="1.1" fill="none"/><rect x="2" y="11" width="12" height="1.2" fill="#555"/></svg>
<svg class="a" style="left:925px;top:50px" width="16" height="16"><path d="M6.5 12.5 V7 H3.2 M5 4.8 L2.7 7 L5 9.2 M9.5 12.5 V7 H12.8 M11 4.8 L13.3 7 L11 9.2" stroke="#6a6a6a" stroke-width="1.15" fill="none"/></svg>
<svg class="a" style="left:1388px;top:50px" width="16" height="16"><path d="M6.5 12.5 V7 H3.2 M5 4.8 L2.7 7 L5 9.2 M9.5 12.5 V7 H12.8 M11 4.8 L13.3 7 L11 9.2" stroke="#6a6a6a" stroke-width="1.15" fill="none"/></svg>
<div class="a" style="left:396px;top:179px;width:701px;height:414px;background:#fff;border:1px solid #444;box-shadow:1px 1px 1px rgba(0,0,0,.45),2px 2px 3px rgba(0,0,0,.3)"></div>
<svg class="a" style="left:1074px;top:187px" width="12" height="12"><path d="M1.5 1.5 L10.5 10.5 M10.5 1.5 L1.5 10.5" stroke="#666" stroke-width="1.8"/></svg>
<div class="a" style="left:427px;top:201px;font-size:23px;line-height:26px;color:#333;-webkit-text-stroke:0.6px #fff;white-space:nowrap;letter-spacing:0.05px">Add Custom Column</div>
<div style="position:absolute;white-space:nowrap;font-size:12px;line-height:14px;color:#333;left:427px;top:244px">New column name</div>
<div class="a" style="left:426px;top:260px;width:425px;height:22px;border:1px solid #7a7a7a;background:#fff"></div>
<div style="position:absolute;white-space:nowrap;font-size:12px;line-height:14px;color:#333;left:433px;top:265px">Custom</div>
<div class="a" style="left:432px;top:265px;width:1px;height:15px;background:#000"></div>
<div style="position:absolute;white-space:nowrap;font-size:12px;line-height:14px;color:#333;left:427px;top:289px">Custom column formula:</div>
<div class="a" style="left:426px;top:305px;width:425px;height:183px;border:1px solid #c8c8c8;background:#fff"></div>
<div class="a" style="left:432px;top:311px;font-size:11px;line-height:11px;color:#333">=</div>
<div class="a" style="left:441px;top:313px;font-family:'Liberation Mono',monospace;font-size:11px;line-height:13px;color:#222;white-space:nowrap">Excel.Workbook([Content])</div>
<div style="position:absolute;white-space:nowrap;font-size:12px;line-height:14px;color:#333;left:864px;top:289px">Available columns:</div>
<div class="a" style="left:864px;top:305px;width:202px;height:151px;border:1px solid #c8c8c8;background:#fff;overflow:hidden"></div>
<div class="a" style="left:865px;top:306px;width:183px;height:20px;background:#e8e8e8"></div>
<div class="a" style="left:865px;top:306px;width:2px;height:20px;background:#f2c811"></div>
<div class="a" style="left:1048px;top:306px;width:17px;height:149px;background:#efefef"></div>
<div class="a" style="left:1049px;top:340px;width:15px;height:75px;background:#c8c8c8"></div>
<svg class="a" style="left:1050px;top:322px" width="13" height="11"><path d="M1.5 9.2 L6.5 3.6 L11.5 9.2" stroke="#505050" stroke-width="2.6" fill="none"/></svg>
<svg class="a" style="left:1050px;top:427px" width="13" height="11"><path d="M1.5 1.8 L6.5 7.4 L11.5 1.8" stroke="#505050" stroke-width="2.6" fill="none"/></svg>
<div class="a" style="left:865px;top:306px;width:183px;height:149px;overflow:hidden">
<div style="position:absolute;white-space:nowrap;font-size:12px;line-height:14px;color:#333;left:7px;top:4px">Content</div>
<div style="position:absolute;white-space:nowrap;font-size:12px;line-height:14px;color:#333;left:7px;top:24px">Name</div>
<div style="position:absolute;white-space:nowrap;font-size:12px;line-height:14px;color:#333;left:7px;top:44px">Extension</div>
<div style="position:absolute;white-space:nowrap;font-size:12px;line-height:14px;color:#333;left:7px;top:64px">Date accessed</div>
<div style="position:absolute;white-space:nowrap;font-size:12px;line-height:14px;color:#333;left:7px;top:84px">Date modified</div>
<div style="position:absolute;white-space:nowrap;font-size:12px;line-height:14px;color:#333;left:7px;top:104px">Date created</div>
<div style="position:absolute;white-space:nowrap;font-size:12px;line-height:14px;color:#333;left:7px;top:124px">Attributes</div>
<div style="position:absolute;white-space:nowrap;font-size:12px;line-height:14px;color:#333;left:7px;top:144px">Folder Path</div>
</div>
<div class="a" style="left:864px;top:466px;width:202px;height:22px;background:#e9e9e9"></div>
<div style="position:absolute;white-space:nowrap;font-size:12px;line-height:14px;color:#333;left:864px;top:470px;width:202px;text-align:center;letter-spacing:-0.3px">&lt;&lt; Insert</div>
<div style="position:absolute;white-space:nowrap;font-size:12px;line-height:14px;color:#333;left:426px;top:495px;color:#1a3fae;text-decoration:underline">Learn about Power BI Desktop formulas</div>
<svg class="a" style="left:428px;top:546px" width="15" height="14"><path d="M1.5 7.5 L5.5 11.5 L13.5 1.5" stroke="#5a9a8f" stroke-width="2.4" fill="none"/></svg>
<div class="a" style="left:450px;top:546px;font-size:13px;line-height:15px;color:#333;white-space:nowrap">No syntax errors have been detected.</div>
<div class="a" style="left:933px;top:541px;width:60px;height:22px;background:#f2c811"></div>
<div style="position:absolute;white-space:nowrap;font-size:12px;line-height:14px;color:#333;left:933px;top:546px;width:60px;text-align:center;color:#333;font-size:11.5px">OK</div>
<div class="a" style="left:1006px;top:541px;width:60px;height:22px;background:#e9e9e9"></div>
<div style="position:absolute;white-space:nowrap;font-size:12px;line-height:14px;color:#333;left:1006px;top:546px;width:60px;text-align:center;color:#333;font-size:11.5px;letter-spacing:-0.3px">Cancel</div>
</body></html>
